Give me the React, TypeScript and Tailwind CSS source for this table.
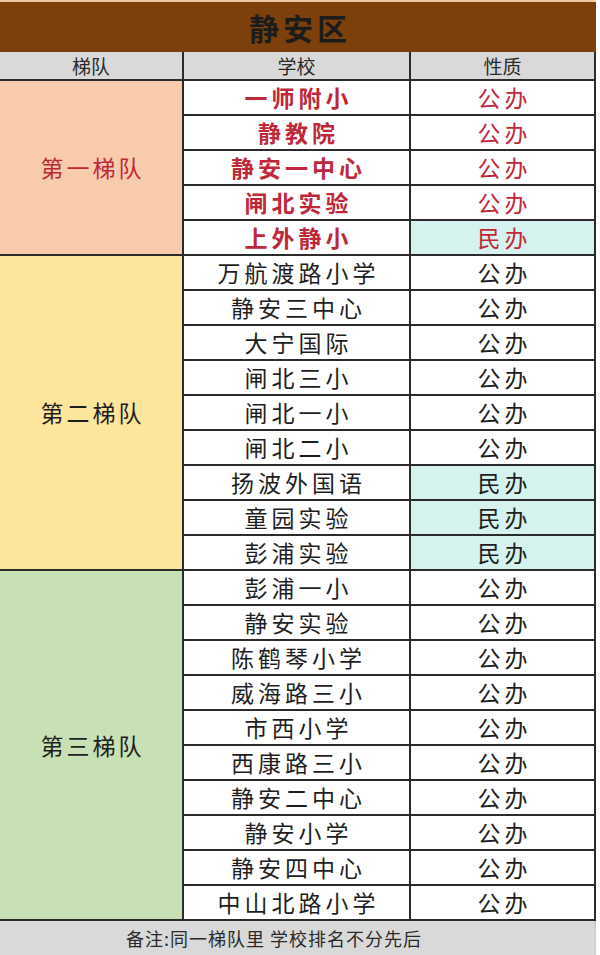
const FONT = { fontFamily: '"Noto Sans CJK SC", "Noto Sans", sans-serif' };

type Row = { name: string; type: '公办' | '民办' };

const TIERS: { label: string; bg: string; red?: boolean; rows: Row[] }[] = [
  {
    label: '第一梯队',
    bg: 'bg-[#f8cbad]',
    red: true,
    rows: [
      { name: '一师附小', type: '公办' },
      { name: '静教院', type: '公办' },
      { name: '静安一中心', type: '公办' },
      { name: '闸北实验', type: '公办' },
      { name: '上外静小', type: '民办' },
    ],
  },
  {
    label: '第二梯队',
    bg: 'bg-[#fee59c]',
    rows: [
      { name: '万航渡路小学', type: '公办' },
      { name: '静安三中心', type: '公办' },
      { name: '大宁国际', type: '公办' },
      { name: '闸北三小', type: '公办' },
      { name: '闸北一小', type: '公办' },
      { name: '闸北二小', type: '公办' },
      { name: '扬波外国语', type: '民办' },
      { name: '童园实验', type: '民办' },
      { name: '彭浦实验', type: '民办' },
    ],
  },
  {
    label: '第三梯队',
    bg: 'bg-[#c7e1b5]',
    rows: [
      { name: '彭浦一小', type: '公办' },
      { name: '静安实验', type: '公办' },
      { name: '陈鹤琴小学', type: '公办' },
      { name: '威海路三小', type: '公办' },
      { name: '市西小学', type: '公办' },
      { name: '西康路三小', type: '公办' },
      { name: '静安二中心', type: '公办' },
      { name: '静安小学', type: '公办' },
      { name: '静安四中心', type: '公办' },
      { name: '中山北路小学', type: '公办' },
    ],
  },
];

export default function App() {
  return (
    <div className="w-[600px] h-[955px] bg-white overflow-hidden" style={FONT}>
      <div className="w-[596px]">
        {/* title */}
        <div className="h-[52px] border-t-2 border-[#efc9a6] bg-[#7d400c] flex items-center justify-center">
          <span className="text-[30px] font-bold text-[#1c1c1c] tracking-[4px] leading-none pl-[4px]">静安区</span>
        </div>

        {/* column headers */}
        <div className="flex h-[29px] bg-[#d9d9d9] border-b-2 border-[#2b2b2b] text-[19px] text-[#2a2a2a] leading-none">
          <div className="w-[184px] border-r-2 border-[#2b2b2b] flex items-center justify-center">梯队</div>
          <div className="w-[227px] border-r-2 border-[#2b2b2b] flex items-center justify-center">学校</div>
          <div className="flex-1 border-r-2 border-[#2b2b2b] flex items-center justify-center">性质</div>
        </div>

        {TIERS.map((tier) => (
          <div key={tier.label} className="flex">
            <div
              className={`w-[184px] ${tier.bg} border-r-2 border-b-2 border-[#2b2b2b] flex items-center justify-center text-[23px] tracking-[3px] leading-none pl-[3px] ${
                tier.red ? 'text-[#c0283a]' : 'text-[#1e1e1e]'
              }`}
            >
              {tier.label}
            </div>
            <div className="flex-1 flex flex-col">
              {tier.rows.map((r) => (
                <div key={r.name} className="flex h-[35px] border-b-2 border-[#2b2b2b]">
                  <div
                    className={`w-[227px] border-r-2 border-[#2b2b2b] flex items-center justify-center text-[23px] tracking-[4px] leading-none pl-[4px] ${
                      tier.red ? 'text-[#c0283a] font-bold' : 'text-[#1e1e1e]'
                    }`}
                  >
                    {r.name}
                  </div>
                  <div
                    className={`flex-1 border-r-2 border-[#2b2b2b] flex items-center justify-center text-[23px] tracking-[4px] leading-none pl-[4px] ${
                      r.type === '民办' ? 'bg-[#d5f2ef]' : 'bg-white'
                    } ${tier.red ? 'text-[#c0283a]' : 'text-[#1e1e1e]'}`}
                  >
                    {r.type}
                  </div>
                </div>
              ))}
            </div>
          </div>
        ))}

        {/* footnote */}
        <div className="h-[34px] bg-[#d9d9d9] border-r-2 border-[#cfcfcf] flex items-center pl-[126px] text-[18px] tracking-[1px] text-[#2a2a2a] leading-none">
          备注:同一梯队里&nbsp;学校排名不分先后
        </div>
      </div>
    </div>
  );
}
